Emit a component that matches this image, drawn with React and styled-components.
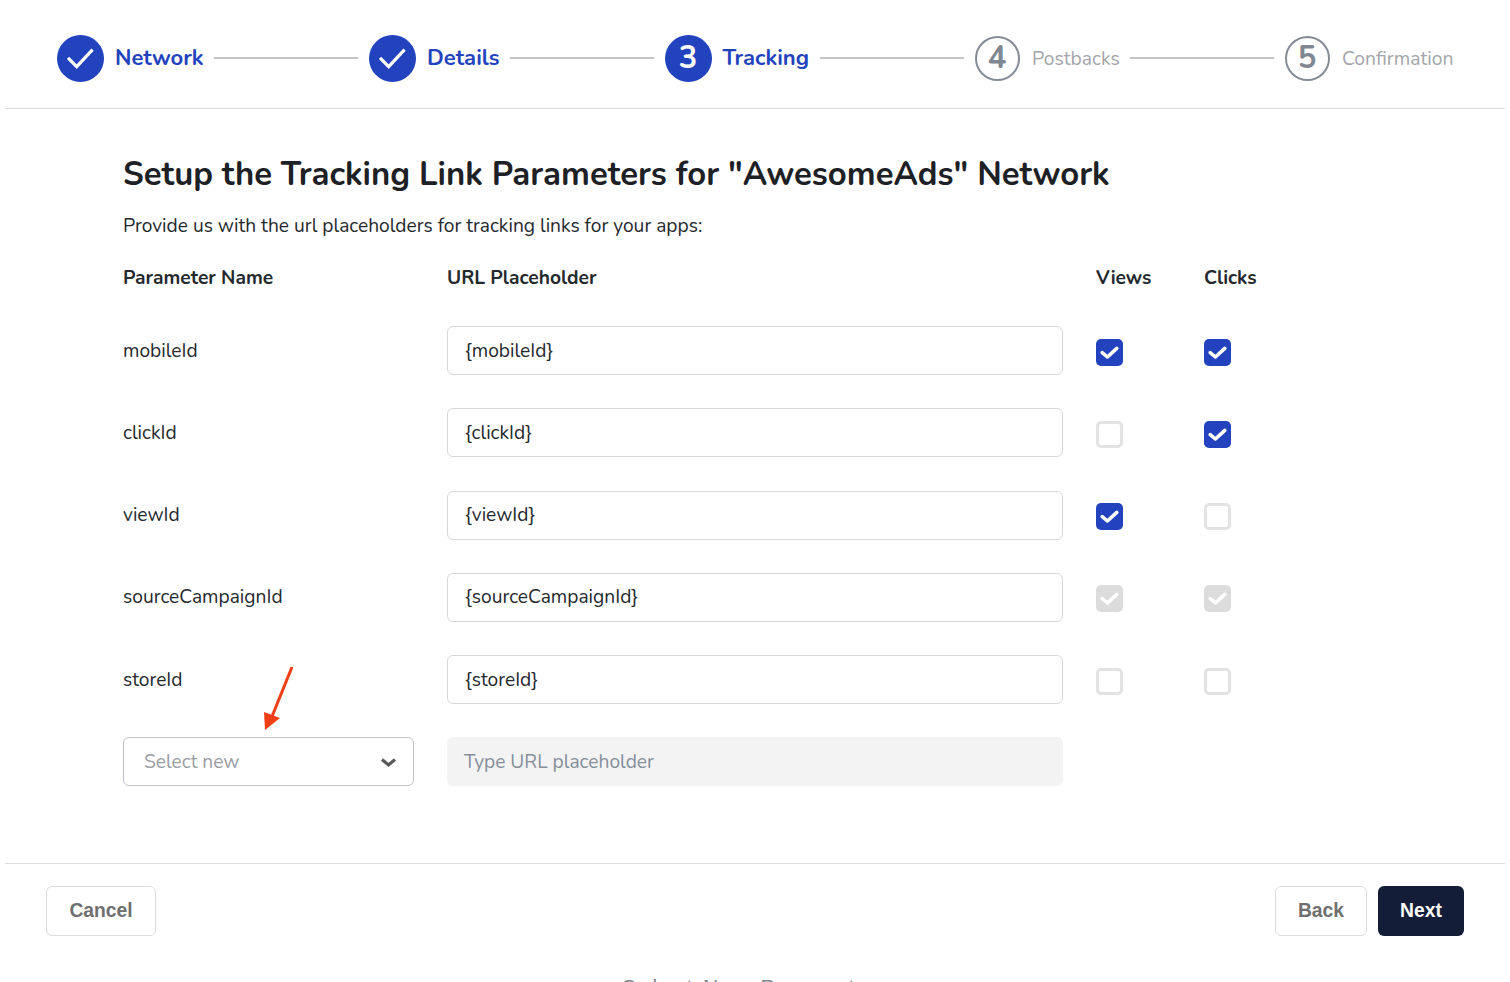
import React from 'react'
import styled, { createGlobalStyle } from 'styled-components'

const GlobalStyle = createGlobalStyle`
  html, body {
    margin: 0;
    padding: 0;
    height: 100%;
    overflow: hidden;
    background: #fff;
  }
  body {
    font-family: 'Nunito', Lato, 'Noto Sans', sans-serif;
    color: #1f2329;
  }
`

const Page = styled.div`
  width: 1500px;
  height: 982px;
  margin-left: 5px;
  overflow: hidden;
`

const Stepper = styled.div`
  display: flex;
  align-items: center;
  height: 100px;
  padding: 8px 0 0 52px;
  gap: 11px;
  border-bottom: 1px solid #dcdcdc;
`

const StepCircle = styled.div`
  width: ${p => (p.$pending ? 45 : 47)}px;
  height: ${p => (p.$pending ? 45 : 47)}px;
  flex-shrink: 0;
  border-radius: 50%;
  box-sizing: border-box;
  display: flex;
  align-items: center;
  justify-content: center;
  font-size: 31px;
  font-weight: 700;
  background: ${p => (p.$pending ? '#fff' : '#2243bd')};
  color: ${p => (p.$pending ? '#7f8792' : '#fff')};
  border: ${p => (p.$pending ? '2px solid #858c97' : 'none')};
`

const StepLabel = styled.span`
  white-space: nowrap;
  width: ${p => p.$width}px;
  margin-left: ${p => (p.$pending ? 1.5 : 0)}px;
  font-weight: ${p => (p.$pending ? 400 : 700)};
  color: ${p => (p.$pending ? '#a3a6ab' : '#2243bd')};
  font-size: ${p => (p.$pending ? 19.3 : 22)}px;
`

const StepLine = styled.div`
  width: 144px;
  height: 2px;
  background: #c4c4c4;
  flex-shrink: 0;
`

const Content = styled.div`
  height: 755px;
  padding: 45px 0 0 118px;
  box-sizing: border-box;
  border-bottom: 1px solid #dcdcdc;
`

const Title = styled.h1`
  margin: 0;
  font-size: 32.9px;
  line-height: 42px;
  font-weight: 700;
  color: #1d2126;
  white-space: nowrap;
`

const Subtitle = styled.p`
  margin: 17px 0 0;
  font-size: 19.2px;
  line-height: 26px;
  color: #25292e;
`

const ParamGrid = styled.div`
  display: grid;
  grid-template-columns: 291px 616px 75px 27px;
  column-gap: 33px;
  margin-top: 26px;
  align-items: center;
`

const HeadCell = styled.div`
  font-size: 19.2px;
  font-weight: 700;
  line-height: 26px;
  height: 61px;
  color: #25292e;
`

const RowLabel = styled.div`
  font-size: 19.2px;
  color: #25292e;
  margin-bottom: 33.25px;
`

const RowInput = styled.div`
  height: 49px;
  box-sizing: border-box;
  border: 1.5px solid #d8d8d8;
  border-radius: 6px;
  padding: 0 17px;
  display: flex;
  align-items: center;
  font-size: 19.2px;
  color: #25292e;
  margin-bottom: 33.25px;
`

const CheckCell = styled.div`
  align-self: start;
  margin-top: 12.5px;
`

const Check = styled.div`
  width: 27px;
  height: 27px;
  box-sizing: border-box;
  border-radius: 5px;
  display: flex;
  align-items: center;
  justify-content: center;
  background: ${p => (p.$state === 'on' ? '#2243bd' : p.$state === 'locked' ? '#dcdcdc' : '#fff')};
  border: ${p => (p.$state === 'off' ? '3px solid #e3e3e3' : 'none')};
`

const SelectCell = styled.div`
  position: relative;
`

const SelectBox = styled.div`
  height: 49px;
  box-sizing: border-box;
  border: 1.5px solid #bfc2cb;
  border-radius: 6px;
  padding: 1px 16px 0 20px;
  display: flex;
  align-items: center;
  justify-content: space-between;
  font-size: 19.2px;
  color: #9a9da3;
`

const PlaceholderBox = styled.div`
  height: 49px;
  box-sizing: border-box;
  background: #f3f3f4;
  border-radius: 6px;
  padding: 1px 17px 0;
  display: flex;
  align-items: center;
  font-size: 19.2px;
  color: #868e9a;
`

const Arrow = styled.svg`
  position: absolute;
  left: 137px;
  top: -72px;
`

const Footer = styled.div`
  display: flex;
  justify-content: space-between;
  padding: 22px 41px 0;
`

const ButtonGroup = styled.div`
  display: flex;
  gap: 11px;
`

const Button = styled.button`
  height: 50px;
  width: ${p => p.$width}px;
  box-sizing: border-box;
  border-radius: 6px;
  font-family: 'Liberation Sans', Arial, sans-serif;
  font-size: 19.3px;
  font-weight: 700;
  padding: 0;
  background: ${p => (p.$primary ? '#141d38' : '#fff')};
  color: ${p => (p.$primary ? '#fff' : '#6f6f6f')};
  border: ${p => (p.$primary ? 'none' : '1.5px solid #dcdcdc')};
`

const CutOff = styled.div`
  margin-top: 39px;
  margin-left: 617px;
  font-family: 'Liberation Sans', Arial, sans-serif;
  font-size: 21px;
  letter-spacing: 2.4px;
  color: #7b8794;
  white-space: nowrap;
`

const CheckMark = () => (
  <svg width="27" height="27" viewBox="0 0 27 27" fill="none">
    <path
      d="M6.2 13.6 L11.4 18 L20.8 9.4"
      stroke="#fff"
      strokeWidth="3.6"
      strokeLinecap="round"
      strokeLinejoin="round"
    />
  </svg>
)

const StepTick = () => (
  <svg width="47" height="47" viewBox="0 0 47 47" fill="none">
    <path d="M11 22.8 L19.7 31.6 L35.6 14.6" stroke="#fff" strokeWidth="3.2" />
  </svg>
)

const steps = [
  { label: 'Network', done: true, width: 88 },
  { label: 'Details', done: true, width: 71.5 },
  { label: 'Tracking', num: 3, width: 86 },
  { label: 'Postbacks', num: 4, pending: true, width: 86.5 },
  { label: 'Confirmation', num: 5, pending: true, width: 112 },
]

const params = [
  { name: 'mobileId', views: 'on', clicks: 'on' },
  { name: 'clickId', views: 'off', clicks: 'on' },
  { name: 'viewId', views: 'on', clicks: 'off' },
  { name: 'sourceCampaignId', views: 'locked', clicks: 'locked' },
  { name: 'storeId', views: 'off', clicks: 'off' },
]

const CheckBox = ({ state }) => (
  <CheckCell>
    <Check $state={state}>{state !== 'off' && <CheckMark />}</Check>
  </CheckCell>
)

export default function App() {
  return (
    <Page>
      <GlobalStyle />
      <Stepper>
        {steps.map((step, i) => (
          <React.Fragment key={step.label}>
            <StepCircle $pending={step.pending}>{step.done ? <StepTick /> : step.num}</StepCircle>
            <StepLabel $pending={step.pending} $width={step.width}>
              {step.label}
            </StepLabel>
            {i < steps.length - 1 && <StepLine />}
          </React.Fragment>
        ))}
      </Stepper>

      <Content>
        <Title>Setup the Tracking Link Parameters for "AwesomeAds" Network</Title>
        <Subtitle>Provide us with the url placeholders for tracking links for your apps:</Subtitle>

        <ParamGrid>
          <HeadCell>Parameter Name</HeadCell>
          <HeadCell>URL Placeholder</HeadCell>
          <HeadCell>Views</HeadCell>
          <HeadCell>Clicks</HeadCell>

          {params.map(p => (
            <React.Fragment key={p.name}>
              <RowLabel>{p.name}</RowLabel>
              <RowInput>{`{${p.name}}`}</RowInput>
              <CheckBox state={p.views} />
              <CheckBox state={p.clicks} />
            </React.Fragment>
          ))}

          <SelectCell>
            <Arrow width="40" height="70" viewBox="0 0 40 70">
              <path d="M32 2 L11 54" stroke="#f03e17" strokeWidth="3" fill="none" />
              <path d="M5 65 L4 47 L20 53 Z" fill="#f03e17" />
            </Arrow>
            <SelectBox>
              Select new
              <svg width="17" height="11" viewBox="0 0 17 11" fill="none">
                <path d="M2 2.5 L8.5 8 L15 2.5" stroke="#5b5b5b" strokeWidth="3.2" />
              </svg>
            </SelectBox>
          </SelectCell>
          <PlaceholderBox>Type URL placeholder</PlaceholderBox>
        </ParamGrid>
      </Content>

      <Footer>
        <Button $width={110}>Cancel</Button>
        <ButtonGroup>
          <Button $width={92}>Back</Button>
          <Button $width={86} $primary>
            Next
          </Button>
        </ButtonGroup>
      </Footer>
      <CutOff>Select New Parameter</CutOff>
    </Page>
  )
}
